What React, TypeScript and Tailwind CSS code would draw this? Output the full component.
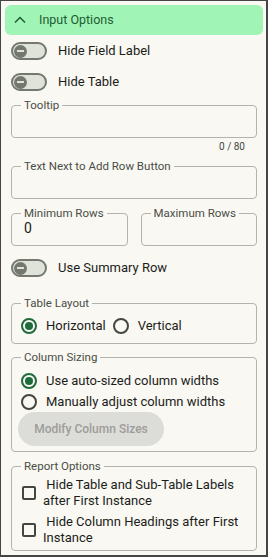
import React from "react";

function Toggle({ label, className = "" }: { label: string; className?: string }) {
  return (
    <div className={`flex items-center gap-[11px] h-[18px] ${className}`}>
      <div className="w-[36px] h-[18px] rounded-full border-2 border-[#74786f] bg-[#dfe3d9] flex items-center pl-[0.5px] shrink-0">
        <div className="w-[13px] h-[13px] rounded-full bg-[#74786f] flex items-center justify-center">
          <div className="w-[7px] h-[2px] bg-[#dfe3d9]" />
        </div>
      </div>
      <span className="text-[13px] leading-[16px] text-[#1c1d19]">{label}</span>
    </div>
  );
}

function TextField({ label, value, className = "" }: { label: string; value?: string; className?: string }) {
  return (
    <fieldset className={`border border-[#b3b4ae] rounded-[4px] pl-[9px] pr-[9px] h-[40px] ${className}`}>
      <legend className="px-[3px] text-[11.5px] leading-[14px] text-[#4a4d45]">{label}</legend>
      {value !== undefined && (
        <div className="pl-[3px] text-[14px] leading-[16px] text-[#1c1d19]">{value}</div>
      )}
    </fieldset>
  );
}

function Radio({ checked, label }: { checked: boolean; label: string }) {
  return (
    <div className="flex items-center gap-[9px]">
      <div
        className={`w-[16px] h-[16px] rounded-full border-2 flex items-center justify-center shrink-0 ${
          checked ? "border-[#1f6b3b]" : "border-[#44473f]"
        }`}
      >
        {checked && <div className="w-[8px] h-[8px] rounded-full bg-[#1f6b3b]" />}
      </div>
      <span className="text-[13px] leading-[16px] text-[#1c1d19]">{label}</span>
    </div>
  );
}

function Check({ label, className = "" }: { label: string; className?: string }) {
  return (
    <div className={`flex items-center gap-[7px] ${className}`}>
      <div className="ml-[1px] w-[14px] h-[14px] border-2 border-[#44473f] rounded-[2px] shrink-0" />
      <span className="text-[13px] leading-[16px] text-[#1c1d19] whitespace-pre-wrap">{label}</span>
    </div>
  );
}

export default function App() {
  return (
    <div
      className="w-[268px] h-[557px] border-l border-t border-r-2 border-b-2 border-[#454545] bg-[#f9f8f3] pl-[4px] pr-[3px] pt-[4px]"
      style={{ fontFamily: "Roboto, 'Liberation Sans', sans-serif" }}
    >
      <div className="flex items-center h-[30px] rounded-[6px] bg-[#a0f4b6] pl-[9px] gap-[13px]">
        <svg width="12" height="12" viewBox="0 0 12 12" fill="none">
          <polyline points="1,8.5 6,3.5 11,8.5" stroke="#1d5a31" strokeWidth="1.5" fill="none" />
        </svg>
        <span className="text-[12.5px] leading-[16px] text-[#1f5c33]">Input Options</span>
      </div>

      <div className="px-[6px]">
        <Toggle label="Hide Field Label" className="mt-[7px]" />
        <Toggle label="Hide Table" className="mt-[13px]" />

        <TextField label="Tooltip" className="mt-[7px]" />
        <div className="mt-[3px] text-right text-[10px] leading-[12px] pr-[12px] text-[#44473f]">0 / 80</div>

        <TextField label="Text Next to Add Row Button" className="mt-[6px]" />

        <div className="mt-[7px] grid grid-cols-2 gap-[13px]">
          <TextField label="Minimum Rows" value="0" />
          <TextField label="Maximum Rows" />
        </div>

        <Toggle label="Use Summary Row" className="mt-[13px]" />

        <fieldset className="mt-[19px] border border-[#b3b4ae] rounded-[4px] pl-[9px] pr-[9px] pt-[6px] h-[48px]">
          <legend className="px-[3px] text-[11.5px] leading-[14px] text-[#4a4d45]">Table Layout</legend>
          <div className="flex items-center h-[20px] gap-[7px]">
            <Radio checked label="Horizontal" />
            <Radio checked={false} label="Vertical" />
          </div>
        </fieldset>

        <fieldset className="mt-[6px] border border-[#b3b4ae] rounded-[4px] pl-[9px] pr-[9px] pt-[6px] h-[102px]">
          <legend className="px-[3px] text-[11.5px] leading-[14px] text-[#4a4d45]">Column Sizing</legend>
          <div className="flex items-center h-[21px]">
            <Radio checked label="Use auto-sized column widths" />
          </div>
          <div className="flex items-center h-[21px]">
            <Radio checked={false} label="Manually adjust column widths" />
          </div>
          <div className="ml-[-3px] w-[146px] h-[34px] rounded-full bg-[#dcdcd8] flex items-center justify-center text-[12px] font-medium text-[#9d9d9a]">
            Modify Column Sizes
          </div>
        </fieldset>

        <fieldset className="mt-[7px] border border-[#b3b4ae] rounded-[4px] pl-[9px] pr-[8px] pt-[4px] h-[92px]">
          <legend className="px-[3px] text-[11.5px] leading-[14px] text-[#4a4d45]">Report Options</legend>
          <Check label=" Hide Table and Sub-Table Labels after First Instance" />
          <Check label=" Hide Column Headings after First Instance" className="mt-[5px]" />
        </fieldset>
      </div>
    </div>
  );
}
